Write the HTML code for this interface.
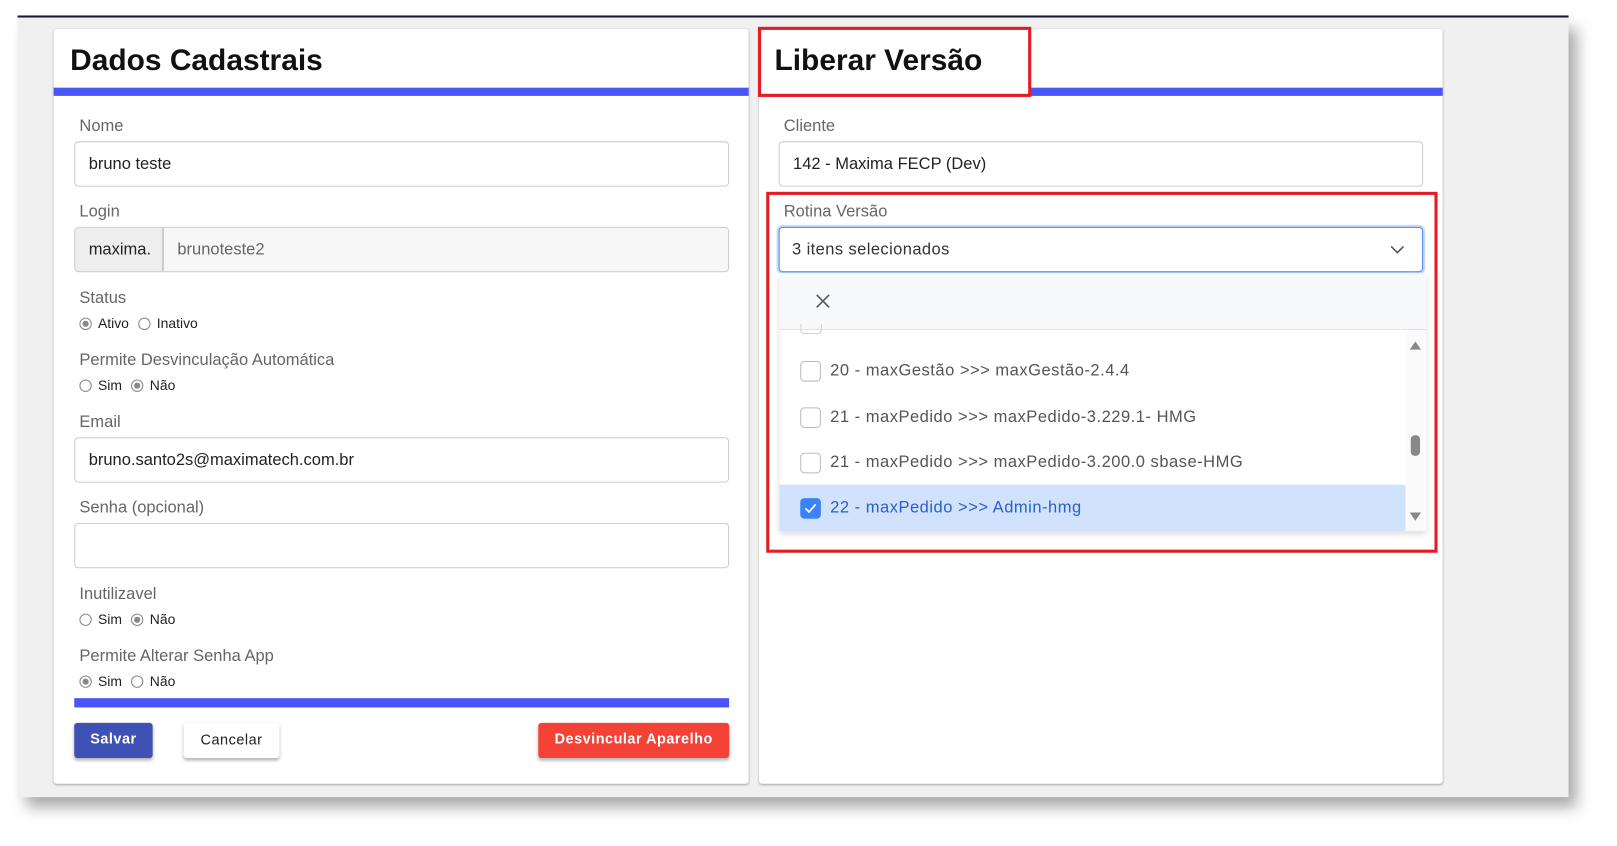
<!DOCTYPE html>
<html><head><meta charset="utf-8"><style>
*{box-sizing:border-box;margin:0;padding:0}
html,body{width:1617px;height:846px;overflow:hidden;background:#fff;font-family:"Liberation Sans",Arial,sans-serif}
#w{position:absolute;left:0;top:0;width:1568px;height:820px;transform:scale(1.03125);transform-origin:0 0}
.a{position:absolute}
.bg{left:17px;top:17px;width:1504px;height:756px;background:#f0f0f0;box-shadow:8px 10px 14px rgba(0,0,0,.35)}
.top{left:17px;top:15px;width:1504px;height:2px;background:#1a1a33}
.panel{background:#fff;border-radius:3px;box-shadow:0 1px 2px rgba(0,0,0,.3)}
.title{font-weight:bold;font-size:29px;color:#111;top:43px}
.bar{background:#4a55f7}
.lbl{font-size:16px;color:#666}
.inp{border:1px solid #ccc;border-radius:4px;height:44px;font-size:16px;color:#222;padding-left:13px;line-height:44px;background:#fff}
.rad{font-size:13.5px;color:#222;display:flex;align-items:center}
.r{width:12px;height:12px;border:1px solid #888;border-radius:50%;display:inline-block;margin-right:6px;position:relative;background:#fff}
.r.on::after{content:"";position:absolute;left:2px;top:2px;width:6px;height:6px;border-radius:50%;background:#888}
.sp{margin-left:9px}
.btn{height:34px;border-radius:3px;font-size:14px;font-weight:bold;color:#fff;text-align:center;line-height:30px;letter-spacing:.5px;box-shadow:0 2px 3px rgba(0,0,0,.3)}
.item{left:756px;width:607px;height:45px;font-size:16px;color:#555;display:flex;align-items:center;padding-left:20px;letter-spacing:.5px}
.cb{width:20px;height:20px;border:1.5px solid #bbb;border-radius:4px;margin-right:9px;background:#fff}
</style></head><body><div id="w">
<div class="a bg"></div>
<div class="a top"></div>

<div class="a panel" style="left:52px;top:28px;width:674px;height:732px"></div>
<div class="a title" style="left:68px">Dados Cadastrais</div>
<div class="a bar" style="left:52px;top:85px;width:674px;height:8px"></div>

<div class="a lbl" style="left:77px;top:114px">Nome</div>
<div class="a inp" style="left:72px;top:137px;width:635px">bruno teste</div>
<div class="a lbl" style="left:77px;top:197px">Login</div>
<div class="a inp" style="left:72px;top:220px;width:86px;background:#eee;border-radius:4px 0 0 4px;color:#222">maxima.</div>
<div class="a inp" style="left:158px;top:220px;width:549px;background:#f7f7f7;border-radius:0 4px 4px 0;color:#666">brunoteste2</div>
<div class="a lbl" style="left:77px;top:281px">Status</div>
<div class="a rad" style="left:77px;top:306px"><span class="r on"></span>Ativo<span class="r sp"></span>Inativo</div>
<div class="a lbl" style="left:77px;top:341px">Permite Desvinculação Automática</div>
<div class="a rad" style="left:77px;top:366px"><span class="r"></span>Sim<span class="r on sp"></span>Não</div>
<div class="a lbl" style="left:77px;top:401px">Email</div>
<div class="a inp" style="left:72px;top:424px;width:635px">bruno.santo2s@maximatech.com.br</div>
<div class="a lbl" style="left:77px;top:484px">Senha (opcional)</div>
<div class="a inp" style="left:72px;top:507px;width:635px"></div>
<div class="a lbl" style="left:77px;top:568px">Inutilizavel</div>
<div class="a rad" style="left:77px;top:593px"><span class="r"></span>Sim<span class="r on sp"></span>Não</div>
<div class="a lbl" style="left:77px;top:628px">Permite Alterar Senha App</div>
<div class="a rad" style="left:77px;top:653px"><span class="r on"></span>Sim<span class="r sp"></span>Não</div>
<div class="a bar" style="left:72px;top:677px;width:635px;height:9px"></div>
<div class="a btn" style="left:72px;top:701px;width:76px;background:#3f51b5">Salvar</div>
<div class="a btn" style="left:178px;top:701px;width:93px;background:#fff;color:#222;font-weight:normal;line-height:32px">Cancelar</div>
<div class="a btn" style="left:522px;top:701px;width:185px;background:#f44336">Desvincular Aparelho</div>

<div class="a panel" style="left:736px;top:28px;width:663px;height:732px"></div>
<div class="a title" style="left:751px">Liberar Versão</div>
<div class="a bar" style="left:999px;top:85px;width:400px;height:8px"></div>
<div class="a" style="left:735px;top:26px;width:265px;height:68px;border:3px solid #e31b23"></div>

<div class="a lbl" style="left:760px;top:114px">Cliente</div>
<div class="a inp" style="left:755px;top:137px;width:625px">142 - Maxima FECP (Dev)</div>
<div class="a" style="left:743px;top:186px;width:651px;height:350px;border:3px solid #e31b23"></div>
<div class="a lbl" style="left:760px;top:197px">Rotina Versão</div>
<div class="a inp" style="left:755px;top:220px;width:625px;border:1.5px solid #4a86e8;box-shadow:0 0 0 2px #c6dafb;color:#333;padding-left:12px;letter-spacing:.4px">3 itens selecionados</div>
<svg class="a" style="left:1347px;top:235px" width="16" height="14"><path d="M2 4l6 6 6-6" stroke="#555" stroke-width="1.5" fill="none"/></svg>

<div class="a" style="left:756px;top:265px;width:627px;height:250px;background:#fff;box-shadow:0 3px 6px rgba(0,0,0,.15)"></div>
<div class="a" style="left:756px;top:265px;width:627px;height:55px;background:#f8f9fa;border-bottom:1px solid #e2e2e2"></div>
<svg class="a" style="left:791px;top:285px" width="14" height="14"><path d="M1 1l12 12M13 1L1 13" stroke="#555" stroke-width="1.5"/></svg>
<div class="a" style="left:776px;top:314px;width:21px;height:10px;border:1.5px solid #ccc;border-top:none;border-radius:0 0 4px 4px"></div>
<div class="a item" style="top:337px"><span class="cb"></span>20 - maxGestão &gt;&gt;&gt; maxGestão-2.4.4</div>
<div class="a item" style="top:382px"><span class="cb"></span>21 - maxPedido &gt;&gt;&gt; maxPedido-3.229.1- HMG</div>
<div class="a item" style="top:426px"><span class="cb"></span>21 - maxPedido &gt;&gt;&gt; maxPedido-3.200.0 sbase-HMG</div>
<div class="a item" style="top:470px;background:#d0e2fc;color:#2a5fd0"><span class="cb" style="background:#3b82f6;border-color:#3b82f6;position:relative"><svg style="position:absolute;left:3px;top:4px" width="12" height="10"><path d="M1 5l3.5 3.5L11 1" stroke="#fff" stroke-width="1.6" fill="none"/></svg></span>22 - maxPedido &gt;&gt;&gt; Admin-hmg</div>
<div class="a" style="left:1363px;top:321px;width:20px;height:194px;background:#fafafa"></div>
<svg class="a" style="left:1366px;top:330px" width="13" height="10"><path d="M1 9L6.5 1 12 9z" fill="#888"/></svg>
<svg class="a" style="left:1366px;top:496px" width="13" height="10"><path d="M1 1L6.5 9 12 1z" fill="#888"/></svg>
<div class="a" style="left:1368px;top:422px;width:9px;height:20px;border-radius:4px;background:#888"></div>
</div></body></html>
